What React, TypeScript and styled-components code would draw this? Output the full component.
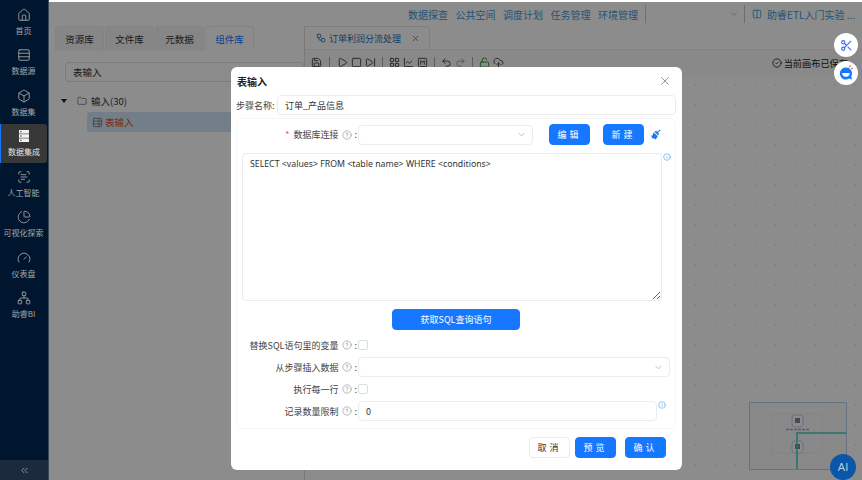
import * as React from "react";
import styled, { createGlobalStyle } from "styled-components";
import {
  Home,
  Rows3,
  Box,
  ScanText,
  ChartPie,
  Gauge,
  Network,
  ChevronsLeft,
  ChevronDown,
  Folder,
  CircleHelp,
  Info,
  X,
  Scissors,
  Save,
  Play,
  Square,
  SkipForward,
  Undo2,
  Redo2,
  LockOpen,
  CloudUpload,
  CircleCheck,
  Columns2,
  SquareM,
  ChartLine,
  TableProperties,
  Workflow,
  LayoutGrid,
} from "lucide-react";

const GlobalStyle = createGlobalStyle`
  html, body {
    margin: 0;
    padding: 0;
    width: 862px;
    height: 480px;
    overflow: hidden;
    font-family: "Noto Sans CJK SC", "Liberation Sans", sans-serif;
    background: #fff;
  }
  * { box-sizing: border-box; }
`;

const Page = styled.div`
  display: flex;
  width: 862px;
  height: 480px;
  position: relative;
  overflow: hidden;
`;

const Sidebar = styled.nav`
  width: 49px;
  flex: none;
  display: flex;
  flex-direction: column;
  padding-top: 2.5px;
  gap: 2px;
  background: #00162e;
  border-right: 1px solid #3d4a58;
`;

const NavItem = styled.div<{ $active?: boolean }>`
  height: 38.5px;
  margin-right: 1px;
  display: flex;
  flex-direction: column;
  align-items: center;
  justify-content: center;
  gap: 3px;
  color: ${(p) => (p.$active ? "#e6e6e6" : "#a6a6a6")};
  font-size: 8px;
  line-height: 11px;
  white-space: nowrap;
  border-radius: 0 3px 3px 0;
  background: ${(p) => (p.$active ? "#383838" : "transparent")};
  border-left: ${(p) => (p.$active ? "1px solid #1677ff" : "none")};
`;

const Collapse = styled.div`
  margin-top: auto;
  height: 20px;
  display: flex;
  align-items: center;
  justify-content: center;
  color: #8d97a3;
  background: #1b2a3d;
`;

const Main = styled.div`
  flex: 1;
  position: relative;
  display: flex;
  flex-direction: column;
  min-width: 0;
`;

const TopBar = styled.header`
  height: 26px;
  flex: none;
  display: flex;
  align-items: center;
  justify-content: flex-end;
  padding: 2px 7px 0 0;
  gap: 5px;
  font-size: 10px;
  color: #3d9ad6;
`;

const TopLinks = styled.div`
  display: flex;
  gap: 7.5px;
  margin-right: 2px;
`;

const TopLink = styled.span`
  white-space: nowrap;
`;

const ProjectSelect = styled.div`
  width: 100px;
  height: 18px;
  display: flex;
  align-items: center;
  justify-content: flex-end;
  padding-right: 5px;
  color: #bbb;
  border-left: 1px solid #c8c8c8;
  border-right: 1px solid #c8c8c8;
  margin-right: 2px;
`;

const Workspace = styled.div`
  flex: 1;
  display: flex;
  min-height: 0;
`;

const LeftPanel = styled.section`
  width: 256px;
  flex: none;
  padding-left: 6px;
  border-right: 1px solid #ddd;
`;

const TabRow = styled.div`
  display: flex;
  gap: 1px;
  height: 25px;
`;

const LibTab = styled.div<{ $active?: boolean }>`
  width: 49px;
  display: flex;
  align-items: center;
  justify-content: center;
  font-size: 9.5px;
  color: ${(p) => (p.$active ? "#1677ff" : "#333")};
  background: ${(p) => (p.$active ? "#fff" : "#f5f5f5")};
  border: 1px solid #eee;
  border-bottom: none;
  border-radius: 4px 4px 0 0;
`;

const SearchBox = styled.div`
  margin: 11px 0 0 10px;
  height: 20px;
  display: flex;
  align-items: center;
  padding-left: 7px;
  font-size: 9.5px;
  color: #333;
  border: 1px solid #e0e0e0;
  border-radius: 4px;
`;

const TreeRow = styled.div`
  margin: 12px 0 0 6px;
  display: flex;
  align-items: center;
  gap: 4px;
  font-size: 9.5px;
  color: #333;
`;

const Caret = styled.span`
  width: 0;
  height: 0;
  margin-right: 6px;
  border: 3px solid transparent;
  border-top: 4px solid #222;
  border-bottom: none;
`;

const TreeLeaf = styled.div`
  margin: 4px 0 0 32px;
  height: 20px;
  display: flex;
  align-items: center;
  gap: 2px;
  padding-left: 5px;
  font-size: 9.5px;
  color: #d9531e;
  background: #d3e6f9;
  border-radius: 3px;
`;

const Canvas = styled.section`
  flex: 1;
  position: relative;
  min-width: 0;
  display: flex;
  flex-direction: column;
`;

const CanvasTabs = styled.div`
  height: 23px;
  flex: none;
  display: flex;
`;

const CanvasTab = styled.div`
  width: 125px;
  display: flex;
  align-items: center;
  gap: 3px;
  padding-left: 11px;
  font-size: 9px;
  color: #1c6fb8;
  border-right: 1px solid #e6e6e6;
  border-top: 1px solid #e6e6e6;
  border-radius: 0 5px 0 0;
`;

const TabTitle = styled.span`
  white-space: nowrap;
  margin-right: 7px;
`;

const ToolRow = styled.div`
  height: 26px;
  flex: none;
  display: flex;
  align-items: center;
  gap: 3px;
  padding: 0 14px 0 6px;
  color: #444;
  background: #fafafa;
  border-top: 1px solid #eee;
`;

const ToolSep = styled.span<{ $wide?: boolean }>`
  width: 1px;
  height: 12px;
  background: #aaa;
  margin: 0 ${(p) => (p.$wide ? "4px" : "3px")};
`;

const SavedNote = styled.span`
  margin-left: auto;
  display: flex;
  align-items: center;
  gap: 2px;
  font-size: 9.2px;
  color: #222;
  white-space: nowrap;
`;

const Board = styled.div`
  flex: 1;
  background-image: radial-gradient(#efefef 1px, transparent 1px);
  background-size: 20px 20px;
`;

const Minimap = styled.div`
  position: absolute;
  right: 15px;
  bottom: 10px;
  width: 98px;
  height: 68px;
  background: #fafafa;
  border: 1px solid #b8d0ea;
`;

const Mask = styled.div`
  position: absolute;
  inset: 2px 0 0 0;
  background: rgba(0, 0, 0, 0.45);
  display: flex;
  justify-content: center;
  align-items: flex-start;
  padding: 65px 0 0 2px;
`;

const Modal = styled.div`
  width: 451px;
  height: 403px;
  display: flex;
  flex-direction: column;
  padding: 0 6px 0 5px;
  background: #fff;
  border-radius: 6px;
  color: #333;
  font-size: 9px;
`;

const ModalHead = styled.div`
  height: 28px;
  flex: none;
  display: flex;
  align-items: center;
  justify-content: space-between;
  padding: 0 4px 0 1px;
  font-size: 10px;
  font-weight: 700;
  color: #222;
`;

const CloseIcon = styled(X)`
  color: #777;
`;

const NameRow = styled.div`
  display: flex;
  align-items: center;
  gap: 2px;
  height: 20px;
  margin-bottom: 3px;
`;

const NameLabel = styled.label`
  width: 39px;
  flex: none;
  white-space: nowrap;
  color: #444;
`;

const Field = styled.div<{ $width?: number; $grow?: boolean }>`
  width: ${(p) => (p.$width ? `${p.$width}px` : "auto")};
  flex: ${(p) => (p.$grow ? "1" : "none")};
  height: 20px;
  display: flex;
  align-items: center;
  justify-content: space-between;
  padding: 0 7px;
  background: #fff;
  border: 1px solid #ececec;
  border-radius: 4px;
  color: #333;
`;

const SelectArrow = styled(ChevronDown)`
  color: #bbb;
  margin-right: -2px;
`;

const FormCard = styled.div`
  height: 311px;
  flex: none;
  display: flex;
  flex-direction: column;
  padding: 5px 5px 0 5px;
  border: 1px solid #f7f7f7;
  border-radius: 6px;
`;

const FormRow = styled.div`
  display: flex;
  align-items: center;
  min-height: 20px;
`;

const Label = styled.div<{ $required?: boolean }>`
  width: 116px;
  flex: none;
  display: flex;
  align-items: center;
  justify-content: flex-end;
  gap: 2px;
  color: #444;
  white-space: nowrap;
  &::before {
    content: ${(p) => (p.$required ? '"*"' : "none")};
    color: #ff4d4f;
    margin-right: 2px;
  }
`;

const HelpIcon = styled(CircleHelp)`
  color: #888;
  margin-left: 2px;
`;

const Colon = styled.span`
  margin-right: 1px;
`;

const Button = styled.button<{ $primary?: boolean; $wide?: boolean }>`
  width: ${(p) => (p.$wide ? "128px" : "41px")};
  height: 21px;
  padding: 0;
  font-family: inherit;
  font-size: 9px;
  letter-spacing: ${(p) => (p.$wide ? "0" : "3px")};
  color: ${(p) => (p.$primary ? "#fff" : "#333")};
  background: ${(p) => (p.$primary ? "#1677ff" : "#fff")};
  border: 1px solid ${(p) => (p.$primary ? "#1677ff" : "#ececec")};
  border-radius: 4px;
`;

const DbActions = styled.div`
  display: flex;
  align-items: center;
  margin-left: 16px;
  gap: 13px;
`;

const BroomIcon = styled.svg`
  margin-left: -7px;
`;

const SqlRow = styled.div`
  display: flex;
  align-items: flex-start;
  margin-top: 8px;
`;

const SqlBox = styled.textarea`
  width: 420px;
  height: 148px;
  flex: none;
  padding: 4px 7px;
  font-family: "Noto Sans", "Liberation Sans", sans-serif;
  font-size: 8.75px;
  line-height: 12px;
  color: #333;
  border: 1px solid #ececec;
  border-radius: 4px;
  outline: none;
`;

const TipIcon = styled(Info)`
  color: #5aa9ff;
  margin-left: 1px;
  align-self: flex-start;
  flex: none;
`;

const FetchRow = styled.div`
  display: flex;
  justify-content: center;
  margin: 8px 0 5px;
`;

const Options = styled.div`
  display: flex;
  flex-direction: column;
  gap: 2px;
`;

const Checkbox = styled.span`
  width: 10px;
  height: 10px;
  border: 1px solid #ddd;
  border-radius: 2px;
`;

const Footer = styled.div`
  display: flex;
  align-items: center;
  justify-content: flex-end;
  padding: 8px 10px 0 0;
`;

const FooterGap = styled.span<{ $w: number }>`
  width: ${(p) => p.$w}px;
`;

const FloatBtn = styled.div<{ $top: number }>`
  position: absolute;
  right: 4px;
  top: ${(p) => p.$top}px;
  width: 24px;
  height: 24px;
  border-radius: 50%;
  background: #fff;
  display: flex;
  align-items: center;
  justify-content: center;
  color: #2f6bff;
`;

const AiBtn = styled.div`
  position: absolute;
  right: 6px;
  bottom: 0;
  width: 26px;
  height: 26px;
  border-radius: 50%;
  display: flex;
  align-items: center;
  justify-content: center;
  background: #0a56a8;
  color: #b9cde6;
  font-size: 11px;
  font-family: "Liberation Sans", sans-serif;
`;

const StackIcon = () => (
  <svg width="14" height="14" viewBox="0 0 14 14" fill="#f2f2f2">
    <rect x="2" y="1" width="10" height="3.6" />
    <rect x="2" y="5.2" width="10" height="3.6" />
    <rect x="2" y="9.4" width="10" height="3.6" />
    <path d="M3 2.8h2M3 7h2M3 11.2h2" stroke="#383838" strokeWidth="0.8" />
  </svg>
);

const navItems = [
  { label: "首页", Icon: Home },
  { label: "数据源", Icon: Rows3 },
  { label: "数据集", Icon: Box },
  { label: "数据集成", Icon: StackIcon, active: true },
  { label: "人工智能", Icon: ScanText },
  { label: "可视化探索", Icon: ChartPie },
  { label: "仪表盘", Icon: Gauge },
  { label: "助睿BI", Icon: Network },
];

const links = ["数据探查", "公共空间", "调度计划", "任务管理", "环境管理"];
const libTabs = ["资源库", "文件库", "元数据", "组件库"];

const Help = () => (
  <>
    <HelpIcon size={10} strokeWidth={1.4} />
    <Colon>:</Colon>
  </>
);

const App: React.FunctionComponent = () => {
  return (
    <Page>
      <GlobalStyle />
      <Sidebar>
        {navItems.map(({ label, Icon, active }) => (
          <NavItem key={label} $active={active}>
            <Icon size={14} strokeWidth={1.5} />
            {label}
          </NavItem>
        ))}
        <Collapse>
          <ChevronsLeft size={11} />
        </Collapse>
      </Sidebar>
      <Main>
        <TopBar>
          <TopLinks>
            {links.map((l) => (
              <TopLink key={l}>{l}</TopLink>
            ))}
          </TopLinks>
          <ProjectSelect>
            <ChevronDown size={10} />
          </ProjectSelect>
          <Columns2 size={10} />
          <TopLink>助睿ETL入门实验 ...</TopLink>
        </TopBar>
        <Workspace>
          <LeftPanel>
            <TabRow>
              {libTabs.map((t) => (
                <LibTab key={t} $active={t === "组件库"}>
                  {t}
                </LibTab>
              ))}
            </TabRow>
            <SearchBox>表输入</SearchBox>
            <TreeRow>
              <Caret />
              <Folder size={10} strokeWidth={1.3} />
              输入(30)
            </TreeRow>
            <TreeLeaf>
              <TableProperties size={11} strokeWidth={1.3} color="#555" />
              表输入
            </TreeLeaf>
          </LeftPanel>
          <Canvas>
            <CanvasTabs>
              <CanvasTab>
                <Workflow size={10} />
                <TabTitle>订单利润分流处理</TabTitle>
                <X size={9} color="#666" />
              </CanvasTab>
            </CanvasTabs>
            <ToolRow>
              <Save size={11} />
              <ToolSep $wide />
              <Play size={11} />
              <Square size={11} />
              <SkipForward size={11} />
              <ToolSep />
              <LayoutGrid size={11} />
              <ChartLine size={11} />
              <SquareM size={11} />
              <ToolSep />
              <Undo2 size={11} />
              <Redo2 size={11} color="#999" />
              <ToolSep />
              <LockOpen size={11} color="#2e8b2e" />
              <CloudUpload size={11} />
              <SavedNote>
                <CircleCheck size={10} />
                当前画布已保存
              </SavedNote>
            </ToolRow>
            <Board />
            <Minimap>
              <svg width="96" height="66" viewBox="0 0 96 66">
                <rect x="22" y="11" width="50" height="39" fill="none" stroke="#f0f0f0" />
                <rect x="42" y="12" width="11" height="12" rx="3" fill="#fff" stroke="#b8cdf0" />
                <rect x="45" y="15" width="5" height="5" fill="#888" />
                <path d="M36 26.5 H60" stroke="#aaa" strokeWidth="1.5" strokeDasharray="3 1" />
                <rect x="42" y="38" width="11" height="12" rx="3" fill="#fff" stroke="#b8cdf0" />
                <rect x="45" y="41" width="5" height="5" fill="#888" />
                <path d="M96 30 H47 V66" fill="none" stroke="#3fd0bb" strokeWidth="1.5" />
              </svg>
            </Minimap>
          </Canvas>
        </Workspace>
        <Mask>
          <Modal>
            <ModalHead>
              表输入
              <CloseIcon size={14} strokeWidth={1.3} />
            </ModalHead>
            <NameRow>
              <NameLabel>步骤名称:</NameLabel>
              <Field $grow>订单_产品信息</Field>
            </NameRow>
            <FormCard>
              <FormRow>
                <Label $required>
                  数据库连接
                  <Help />
                </Label>
                <Field $width={175}>
                  <span />
                  <SelectArrow size={11} />
                </Field>
                <DbActions>
                  <Button $primary>编辑</Button>
                  <Button $primary>新建</Button>
                  <BroomIcon width="11" height="11" viewBox="0 0 11 11" fill="#1677ff">
                    <path d="M7 3.2 9.8.4l.8.8L7.8 4z" />
                    <path d="M3.6 3.2 7.8 7.2 5.6 10.4 3.6 9 3 9.8 1.6 8.8 2.2 8 .6 6.8 2.6 6.4z" />
                    <path d="M4.4 2.8 6.2 1.8 9 4.8 8.2 6.4z" />
                  </BroomIcon>
                </DbActions>
              </FormRow>
              <SqlRow>
                <SqlBox
                  readOnly
                  defaultValue="SELECT <values> FROM <table name> WHERE <conditions>"
                />
                <TipIcon size={8} />
              </SqlRow>
              <FetchRow>
                <Button $primary $wide>
                  获取SQL查询语句
                </Button>
              </FetchRow>
              <Options>
                <FormRow>
                  <Label>
                    替换SQL语句里的变量
                    <Help />
                  </Label>
                  <Checkbox />
                </FormRow>
                <FormRow>
                  <Label>
                    从步骤插入数据
                    <Help />
                  </Label>
                  <Field $width={312}>
                    <span />
                    <SelectArrow size={11} />
                  </Field>
                </FormRow>
                <FormRow>
                  <Label>
                    执行每一行
                    <Help />
                  </Label>
                  <Checkbox />
                </FormRow>
                <FormRow>
                  <Label>
                    记录数量限制
                    <Help />
                  </Label>
                  <Field $width={299}>0</Field>
                  <TipIcon size={8} />
                </FormRow>
              </Options>
            </FormCard>
            <Footer>
              <Button>取消</Button>
              <FooterGap $w={5} />
              <Button $primary>预览</Button>
              <FooterGap $w={9} />
              <Button $primary>确认</Button>
            </Footer>
          </Modal>
        </Mask>
      </Main>
      <FloatBtn $top={33}>
        <Scissors size={13} />
      </FloatBtn>
      <FloatBtn $top={61}>
        <svg width="18" height="18" viewBox="0 0 18 18">
          <path d="M9 3.5a6 6 0 1 0 3.2 11l2.8 1-.8-3A6 6 0 0 0 9 3.5z" fill="#1677ff" />
          <path d="M5.2 9h7.6a3.8 3.8 0 0 1-7.6 0z" fill="#fff" />
          <path d="M12 3.5l1.5-2.2M14 5l1.8-1.2" stroke="#ff6a3d" strokeWidth="1.3" />
        </svg>
      </FloatBtn>
      <AiBtn>AI</AiBtn>
    </Page>
  );
};

export default App;
